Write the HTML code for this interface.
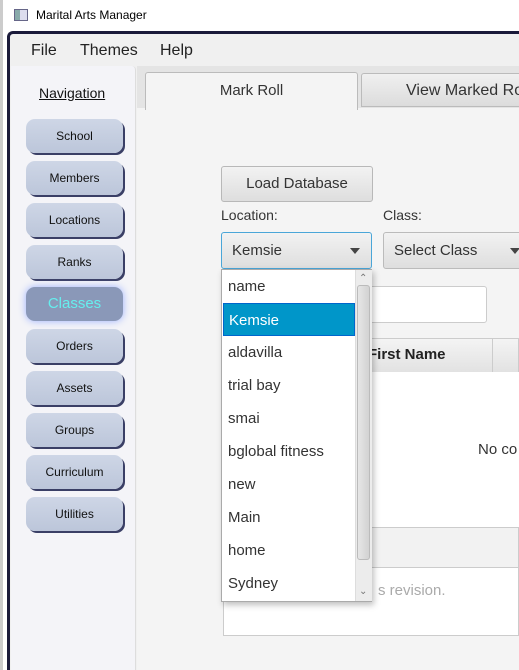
<!DOCTYPE html>
<html><head><style>
*{margin:0;padding:0;box-sizing:border-box}
body{width:519px;height:670px;overflow:hidden;background:#fff;font-family:"Liberation Sans",sans-serif;position:relative;color:#333}
.a{position:absolute;white-space:nowrap}
.nb{position:absolute;left:26px;width:97px;height:34px;border-radius:9px;background:linear-gradient(#ced6e6,#bcc6da);box-shadow:2px 2px 0 #3a3f66;font-size:12px;color:#111;text-align:center;line-height:34px}
.it{position:absolute;left:1px;width:132px;height:33px;line-height:33px;padding-left:5px;font-size:15px;color:#333}
</style></head><body>
<div class="a" style="left:0;top:0;width:519px;height:32px;background:#fff"></div>
<div class="a" style="left:14px;top:9px;width:14px;height:12px;border:1px solid #668;background:linear-gradient(90deg,#8aa 0 40%,#dde 40%)"></div>
<div class="a" style="left:36px;top:8px;font-size:12px;color:#000">Marital Arts Manager</div>
<div class="a" style="left:0;top:0;width:3px;height:670px;background:#ccc"></div>
<div class="a" style="left:7px;top:31px;width:512px;height:639px;border-left:3px solid #1a1a3a;border-top:3px solid #1a1a3a;border-top-left-radius:6px;background:#f0f0f0"></div>
<div class="a" style="left:31px;top:42px;font-size:16px;color:#222">File</div>
<div class="a" style="left:80px;top:42px;font-size:16px;color:#222">Themes</div>
<div class="a" style="left:160px;top:42px;font-size:16px;color:#222">Help</div>
<div class="a" style="left:11px;top:66px;width:125px;height:604px;background:#f4f4f8;border-right:1px solid #ddd;border-top-right-radius:4px"></div>
<div class="a" style="left:39px;top:85px;font-size:14px;color:#111;text-decoration:underline">Navigation</div>
<div class="nb" style="top:119px">School</div>
<div class="nb" style="top:161px">Members</div>
<div class="nb" style="top:203px">Locations</div>
<div class="nb" style="top:245px">Ranks</div>
<div class="nb" style="top:287px;background:#8a98b8;box-shadow:0 0 8px #9ab0ff;color:#6ee;font-size:15px">Classes</div>
<div class="nb" style="top:329px">Orders</div>
<div class="nb" style="top:371px">Assets</div>
<div class="nb" style="top:413px">Groups</div>
<div class="nb" style="top:455px">Curriculum</div>
<div class="nb" style="top:497px">Utilities</div>
<div class="a" style="left:137px;top:66px;width:382px;height:604px;background:#f4f4f4"></div>
<div class="a" style="left:137px;top:66px;width:382px;height:42px;background:#e4e4e4"></div>
<div class="a" style="left:145px;top:72px;width:213px;height:38px;background:#f4f4f4;border:1px solid #bbb;border-bottom:none;border-radius:3px 3px 0 0;text-align:center;line-height:36px;font-size:15px">Mark Roll</div>
<div class="a" style="left:361px;top:73px;width:170px;height:34px;background:linear-gradient(#f0f0f0,#dcdcdc);border:1px solid #bbb;border-radius:3px 3px 0 0;padding-left:44px;line-height:33px;font-size:16px;overflow:hidden">View Marked Roll</div>
<div class="a" style="left:221px;top:166px;width:152px;height:36px;background:linear-gradient(#f2f2f2,#dedede);border:1px solid #b8b8b8;border-radius:3px;text-align:center;line-height:34px;font-size:15px">Load Database</div>
<div class="a" style="left:221px;top:207px;font-size:14px">Location:</div>
<div class="a" style="left:383px;top:207px;font-size:14px">Class:</div>
<div class="a" style="left:221px;top:232px;width:151px;height:37px;background:linear-gradient(#f2f2f2,#dedede);border:1px solid #4aa6d8;border-radius:3px;padding-left:10px;line-height:35px;font-size:15px">Kemsie<span class="a" style="right:11px;top:15px;border:5px solid transparent;border-top:6px solid #444"></span></div>
<div class="a" style="left:383px;top:232px;width:150px;height:37px;background:linear-gradient(#f2f2f2,#dedede);border:1px solid #bbb;border-radius:3px;padding-left:10px;line-height:35px;font-size:15px">Select Class<span class="a" style="left:126px;top:15px;border:5px solid transparent;border-top:6px solid #444"></span></div>
<div class="a" style="left:355px;top:286px;width:132px;height:37px;background:#fff;border:1px solid #ccc;border-radius:3px"></div>
<div class="a" style="left:222px;top:338px;width:297px;height:35px;background:linear-gradient(#f4f4f4,#e2e2e2);border:1px solid #ccc"></div>
<div class="a" style="left:368px;top:346px;font-size:15px;font-weight:bold;color:#222">First Name</div>
<div class="a" style="left:492px;top:338px;width:1px;height:35px;background:#ccc"></div>
<div class="a" style="left:222px;top:372px;width:297px;height:156px;background:#fff;border-left:1px solid #ccc"></div>
<div class="a" style="left:478px;top:441px;font-size:15px">No co</div>
<div class="a" style="left:222px;top:527px;width:297px;height:41px;background:#f2f2f2;border:1px solid #ccc"></div>
<div class="a" style="left:223px;top:567px;width:296px;height:69px;background:#fff;border:1px solid #ccc"></div>
<div class="a" style="left:378px;top:582px;font-size:15px;color:#aaa">s revision.</div>
<div class="a" style="left:221px;top:269px;width:151px;height:333px;background:#fff;border:1px solid #aaa;box-shadow:2px 3px 6px rgba(0,0,0,.25)">
<div class="it" style="top:0">name</div>
<div class="it" style="top:33px;background:#0096c9;color:#fff;border:1px solid #06c">Kemsie</div>
<div class="it" style="top:66px">aldavilla</div>
<div class="it" style="top:99px">trial bay</div>
<div class="it" style="top:132px">smai</div>
<div class="it" style="top:165px">bglobal fitness</div>
<div class="it" style="top:198px">new</div>
<div class="it" style="top:231px">Main</div>
<div class="it" style="top:264px">home</div>
<div class="it" style="top:297px">Sydney</div>
<div class="a" style="left:133px;top:0;width:17px;height:331px;background:#ececec;border-left:1px solid #ddd"></div>
<div class="a" style="left:135px;top:15px;width:13px;height:275px;background:linear-gradient(90deg,#e6e6e6,#d2d2d2);border:1px solid #bbb;border-radius:3px"></div>
<div class="a" style="left:137px;top:3px;font-size:10px;color:#777">&#8963;</div>
<div class="a" style="left:137px;top:316px;font-size:10px;color:#777">&#8964;</div>
</div>
</body></html>
